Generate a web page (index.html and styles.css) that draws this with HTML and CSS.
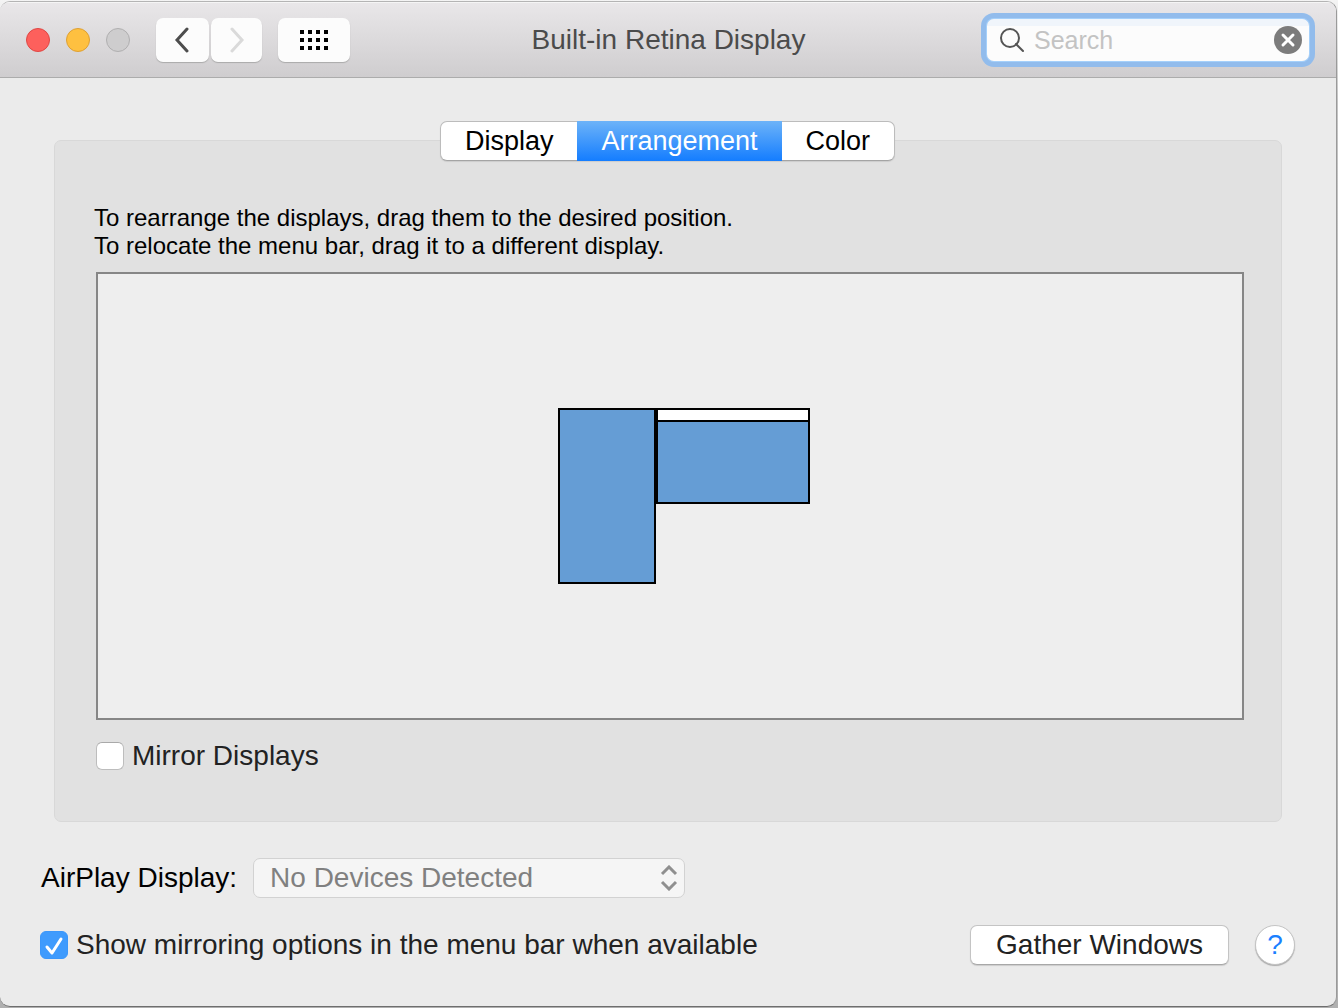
FILE: index.html
```html
<!DOCTYPE html>
<html lang="en">
<head>
<meta charset="utf-8">
<title>Built-in Retina Display</title>
<link rel="stylesheet" href="styles.css">
</head>
<body>
<div class="window">
  <header class="titlebar">
    <div class="lights">
      <button class="light light-close" aria-label="Close"></button>
      <button class="light light-minimize" aria-label="Minimize"></button>
      <button class="light light-zoom" aria-label="Zoom" disabled></button>
    </div>
    <nav class="nav">
      <button class="tool back" aria-label="Back">
        <svg width="20" height="26" viewBox="0 0 20 26"><path d="M14 2 4 13 14 24" fill="none" stroke="#4d4d4d" stroke-width="3" stroke-linecap="round"/></svg>
      </button>
      <button class="tool forward" aria-label="Forward" disabled>
        <svg width="16" height="26" viewBox="0 0 16 26"><path d="M3 2 13 13 3 24" fill="none" stroke="#dadada" stroke-width="3" stroke-linecap="round"/></svg>
      </button>
    </nav>
    <button class="tool show-all" aria-label="Show All">
      <svg width="28" height="20" viewBox="0 0 28 20" shape-rendering="crispEdges"><path d="M0 0h4v4H0zM8 0h4v4H8zM16 0h4v4h-4zM24 0h4v4h-4zM0 8h4v4H0zM8 8h4v4H8zM16 8h4v4h-4zM24 8h4v4h-4zM0 16h4v4H0zM8 16h4v4H8zM16 16h4v4h-4zM24 16h4v4h-4z"/></svg>
    </button>
    <h1 class="title">Built-in Retina Display</h1>
    <div class="search">
      <svg width="26" height="26" viewBox="0 0 26 26"><g fill="none" stroke="#555" stroke-width="2"><circle cx="11" cy="11" r="9"/><path d="m17 17 7 7" stroke-linecap="round"/></g></svg>
      <input class="search-input" type="text" placeholder="Search" aria-label="Search">
      <button class="clear" aria-label="Clear search">
        <svg width="28" height="28" viewBox="0 0 28 28"><circle cx="14" cy="14" r="14" fill="#7c7c7c"/><path d="m9 9 10 10M19 9 9 19" stroke="#fff" stroke-width="3" stroke-linecap="round"/></svg>
      </button>
    </div>
  </header>

  <main class="content">
    <div class="tabs" role="tablist">
      <button class="tab" role="tab" aria-selected="false">Display</button>
      <button class="tab" role="tab" aria-selected="true">Arrangement</button>
      <button class="tab" role="tab" aria-selected="false">Color</button>
    </div>
    <section class="panel">
      <p class="hint">To rearrange the displays, drag them to the desired position.<br>To relocate the menu bar, drag it to a different display.</p>
      <div class="canvas">
        <div class="screen screen-portrait"></div>
        <div class="screen screen-main"><div class="menubar"></div></div>
      </div>
      <label class="check"><input type="checkbox"> Mirror Displays</label>
    </section>

    <div class="airplay">
      <label for="airplay">AirPlay Display:</label>
      <div class="popup">
        <select id="airplay" disabled><option>No Devices Detected</option></select>
        <svg class="popup-arrows" width="18" height="26" viewBox="0 0 18 26"><path d="m2 9 7-7 7 7M2 17l7 7 7-7" fill="none" stroke="#8f8f8f" stroke-width="3"/></svg>
      </div>
    </div>
    <footer class="footer">
      <label class="check"><input type="checkbox" checked> Show mirroring options in the menu bar when available</label>
      <div class="actions">
        <button class="push">Gather Windows</button>
        <button class="help" aria-label="Help">?</button>
      </div>
    </footer>
  </main>
</div>
</body>
</html>
```
FILE: styles.css
```css
* {
  box-sizing: border-box;
}

body {
  margin: 0;
  min-height: 100vh;
  display: flex;
  padding: 1px 1px 1px 0;
  background: linear-gradient(#f4f4f4, #c4c4c4 10%, #b0b0b0);
  font: 28px/32px "Liberation Sans", Arial, sans-serif;
  color: #222;
}

button,
input,
select {
  font: inherit;
  color: inherit;
  margin: 0;
  padding: 0;
  border: 0;
}

svg {
  display: block;
  flex: none;
}

.window {
  flex: 1;
  display: flex;
  flex-direction: column;
  border: 1px solid #9a9a9a;
  border-width: 1px 1px 1px 0;
  border-top-color: #b4b4b4;
  border-bottom-color: #6e6e6e;
  border-radius: 10px;
  background: #ebebeb;
  overflow: hidden;
}

.titlebar {
  height: 76px;
  flex: none;
  display: flex;
  align-items: center;
  padding: 0 27px 0 26px;
  background: linear-gradient(#e9e7e9, #cfcdcf);
  border-bottom: 1px solid #acacac;
  box-shadow: inset 0 1px #f5f5f5;
}

.lights {
  display: flex;
  gap: 16px;
  margin-right: 26px;
}

.light {
  width: 24px;
  height: 24px;
  border-radius: 50%;
  border: 1px solid;
}

.light-close {
  background: #fd605c;
  border-color: #df4744;
}

.light-minimize {
  background: #fec040;
  border-color: #dea034;
}

.light-zoom {
  background: #cecdce;
  border-color: #b0afb0;
}

.nav {
  display: flex;
  gap: 2px;
  margin-right: 16px;
}

.tool {
  height: 44px;
  display: flex;
  align-items: center;
  justify-content: center;
  border-radius: 7px;
  background: #fcfcfc;
  box-shadow: 0 1px 1px #aaa;
}

.back {
  width: 53px;
}

.forward {
  width: 51px;
}

.show-all {
  width: 72px;
}

.title {
  flex: 1;
  margin: 0;
  font-size: 28px;
  font-weight: 400;
  text-align: center;
  color: #4b4b4b;
}

.search {
  width: 322px;
  height: 42px;
  display: flex;
  align-items: center;
  gap: 9px;
  padding: 0 7px 0 12px;
  border-radius: 7px;
  background: linear-gradient(#f0f5fb 7px, #fcfcfc 7px);
  box-shadow: 0 0 0 1px #a5d0fa, 0 0 0 6px #92bcec;
}

.search-input {
  flex: 1;
  min-width: 0;
  background: none;
  outline: 0;
  font-size: 25px;
}

.search-input::placeholder {
  color: #c3c3c3;
  opacity: 1;
}

.clear {
  background: none;
}

.content {
  flex: 1;
  display: flex;
  flex-direction: column;
  padding: 43px 41px 41px 40px;
}

.tabs {
  display: flex;
  align-self: center;
  height: 40px;
  margin-bottom: -21px;
  border: 1px solid #bcbcbc;
  border-bottom-color: #a4a4a4;
  border-radius: 7px;
  background: #fff;
  box-shadow: 0 1px 1px #ccc;
  font-size: 27px;
  z-index: 1;
}

.tab {
  padding: 0 24px;
  background: none;
  color: #000;
}

.tab[aria-selected="true"] {
  margin: -1px 0;
  background: linear-gradient(#6db3f8, #147dff);
  color: #fff;
}

.panel {
  flex: 1;
  display: flex;
  flex-direction: column;
  margin: 0 13px 0 14px;
  padding: 63px 37px 51px 39px;
  border: 1px solid #d8d8d8;
  border-radius: 7px;
  background: #e1e1e1;
}

.hint {
  margin: 0 0 12px;
  font-size: 24px;
  line-height: 28px;
  color: #000;
}

.canvas {
  position: relative;
  flex: 1;
  min-height: 240px;
  margin: 0 0 20px 2px;
  border: 2px solid #868686;
  background: #eee;
}

.screen {
  position: absolute;
  top: calc(50% - 88px);
  border: 2px solid #000;
  background: #659dd5;
}

.screen-portrait {
  left: calc(50% - 112px);
  width: 98px;
  height: 176px;
}

.screen-main {
  left: calc(50% - 14px);
  width: 154px;
  height: 96px;
}

.menubar {
  height: 12px;
  border-bottom: 2px solid #000;
  background: #fff;
}

.check {
  display: flex;
  align-items: center;
  gap: 8px;
}

.panel .check {
  margin: 0 0 -2px 2px;
}

.check input {
  appearance: none;
  flex: none;
  width: 28px;
  height: 28px;
  border: 1px solid #bdbdbd;
  border-top-color: #a9a9a9;
  border-radius: 6px;
  background: #fff;
}

.check input:checked {
  border-color: #3b97fb;
  background: #3f9bfd url("data:image/svg+xml,%3Csvg xmlns='http://www.w3.org/2000/svg' viewBox='0 0 26 26'%3E%3Cpath d='m6 15 5 6L20 7' fill='none' stroke='white' stroke-width='3' stroke-linecap='round' stroke-linejoin='round'/%3E%3C/svg%3E");
}

.airplay {
  display: flex;
  align-items: center;
  gap: 16px;
  margin: 36px 0 27px 1px;
  color: #000;
}

.popup {
  position: relative;
  width: 432px;
}

.popup select {
  appearance: none;
  display: block;
  width: 100%;
  height: 40px;
  padding: 0 40px 0 16px;
  border: 1px solid #d2d2d2;
  border-radius: 7px;
  background: #f5f5f5;
  color: #808080;
  opacity: 1;
}

.popup-arrows {
  position: absolute;
  top: 7px;
  right: 7px;
  pointer-events: none;
}

.footer {
  display: flex;
  align-items: center;
  justify-content: space-between;
}

.actions {
  display: flex;
  align-items: center;
  gap: 26px;
}

.push {
  height: 40px;
  padding: 0 25px;
  border: 1px solid #c4c4c4;
  border-bottom-color: #a8a8a8;
  border-radius: 7px;
  background: #fff;
  box-shadow: 0 1px 1px #ccc;
}

.help {
  width: 40px;
  height: 40px;
  border: 1px solid #c4c4c4;
  border-radius: 50%;
  background: #fff;
  box-shadow: 0 1px 1px #aaa;
  color: #1a80ff;
}
```
